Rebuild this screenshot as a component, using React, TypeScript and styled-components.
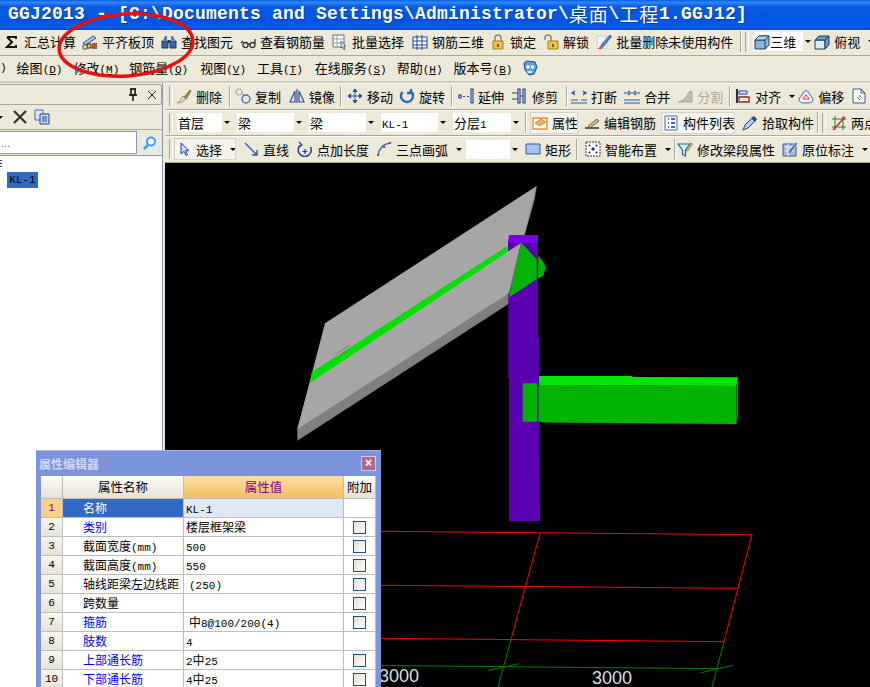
import React from "react";
import styled, { createGlobalStyle } from "styled-components";

const CJK = `"Noto Sans CJK SC", "Liberation Sans", sans-serif`;
const MONO = `"Liberation Mono", "Noto Sans CJK SC", monospace`;

const GlobalStyle = createGlobalStyle`
  html, body { margin: 0; padding: 0; background: #ece9d8; }
  body { font-family: ${CJK}; font-size: 13px; color: #000; }
`;

const Shell = styled.div`
  position: relative;
  width: 870px;
  height: 687px;
  overflow: hidden;
  background: #ece9d8;
`;

const TitleBar = styled.div`
  height: 30px;
  box-sizing: border-box;
  padding: 0 0 2px 8px;
  display: flex;
  align-items: center;
  background: linear-gradient(180deg, #0a5fe6 0%, #2f86f5 8%, #0a5be2 22%, #0054e3 70%, #0a5ee8 90%, #0048c8 100%);
  color: #fff;
  font-family: ${MONO};
  font-weight: bold;
  font-size: 18px;
  letter-spacing: 0.2px;
  white-space: pre;
  text-shadow: 1px 1px 0 #0a3aa0;
`;

const TitleCjk = styled.span`
  font-size: 19px;
  font-weight: normal;
  letter-spacing: 0.7px;
`;

const Bar = styled.div<{ $h: number; $pad?: number }>`
  display: flex;
  align-items: center;
  height: ${(p) => p.$h}px;
  padding-left: ${(p) => p.$pad ?? 0}px;
  padding-bottom: 1px;
  box-sizing: border-box;
  background: #ece9d8;
  white-space: nowrap;
  overflow: hidden;
`;

const MainBar = styled(Bar)`
  padding-bottom: 3px;
  border-top: 1px solid #f6f4ea;
  border-bottom: 1px solid #aca899;
`;

const MenuBar = styled(Bar)`
  padding-bottom: 2px;
  border-bottom: 2px solid #cfccbc;
`;

const ToolRow = styled(Bar)`
  border-bottom: 1px solid #aca899;
  border-top: 1px solid #fbfaf4;
`;

const Body = styled.div`
  display: flex;
  height: 604px;
`;

const LeftPanel = styled.div`
  width: 162px;
  flex: none;
  display: flex;
  flex-direction: column;
  border-right: 1px solid #8a9ab0;
  box-sizing: content-box;
`;

const PanelHead = styled.div`
  height: 19px;
  margin-top: 1px;
  display: flex;
  align-items: center;
  justify-content: flex-end;
  gap: 3px;
  padding-right: 1px;
  border: 1px solid #aca899;
  border-left: 0;
  border-radius: 0 3px 3px 0;
`;

const PanelTools = styled.div`
  height: 24px;
  display: flex;
  align-items: center;
  border-bottom: 1px solid #aca899;
`;

const SearchRow = styled.div`
  height: 25px;
  display: flex;
  align-items: center;
  gap: 5px;
`;

const SearchBox = styled.div`
  width: 137px;
  height: 23px;
  box-sizing: border-box;
  background: #fff;
  border: 1px solid #7f9db9;
  border-left: 0;
  color: #888;
  font-size: 11px;
  line-height: 20px;
  padding-left: 1px;
`;

const Tree = styled.div`
  flex: 1;
  background: #fff;
  border-top: 1px solid #7f9db9;
  padding: 2px 0 0 0;
  font-family: ${MONO};
  font-size: 11px;
`;

const TreeStub = styled.div`
  height: 14px;
  line-height: 12px;
  margin-left: -4px;
`;

const TreeItem = styled.div`
  margin-left: 7px;
  width: 31px;
  height: 16px;
  line-height: 16px;
  text-align: center;
  background: #316ac5;
  color: #000;
`;

const Work = styled.div`
  flex: 1;
  min-width: 0;
  margin-left: 2px;
  display: flex;
  flex-direction: column;
`;

const Canvas = styled.div`
  flex: 1;
  background: #000;
`;

const Grip = styled.span<{ $r?: number }>`
  width: 2px;
  height: 20px;
  margin: 0 ${(p) => p.$r ?? 4}px 0 4px;
  flex: none;
  border-left: 1px solid #aca899;
  border-right: 1px solid #fff;
`;

const Sep = styled.span<{ $l: number; $r: number }>`
  width: 1px;
  height: 21px;
  flex: none;
  margin-left: ${(p) => p.$l}px;
  margin-right: ${(p) => p.$r}px;
  background: #aca899;
  box-shadow: 1px 0 0 #fff;
`;

const Tool = styled.span<{ $l: number; $on?: boolean; $off?: boolean }>`
  display: inline-flex;
  align-items: center;
  flex: none;
  gap: 4px;
  margin-left: ${(p) => p.$l}px;
  height: 22px;
  box-sizing: border-box;
  color: ${(p) => (p.$off ? "#aca899" : "#000")};
  ${(p) => (p.$on ? "background: #f4f3ec; outline: 1px solid #d6d3c4; outline-offset: -1px; padding-left: 2px;" : "")}
`;

const Ascii = styled.span<{ $u?: boolean }>`
  font-family: ${MONO};
  font-size: 11px;
  white-space: pre;
  text-decoration: ${(p) => (p.$u ? "underline" : "none")};
`;

const Arrow = styled.span<{ $l?: number }>`
  flex: none;
  margin-left: ${(p) => p.$l ?? 4}px;
  width: 0;
  height: 0;
  border-left: 3px solid transparent;
  border-right: 3px solid transparent;
  border-top: 3px solid #000;
`;

const Combo = styled.span<{ $w: number; $l: number }>`
  display: inline-flex;
  align-items: center;
  flex: none;
  margin-left: ${(p) => p.$l}px;
  width: ${(p) => p.$w}px;
  height: 19px;
  background: #fff;
  font-size: 13px;
  padding-left: 1px;
  box-sizing: border-box;
`;

const ComboText = styled.span`
  flex: 1;
  min-width: 0;
`;

const ComboDrop = styled.span`
  width: 10px;
  height: 19px;
  flex: none;
  background: #ece9d8;
  display: flex;
  align-items: center;
  justify-content: center;
`;

const Menu = styled.span<{ $l: number }>`
  flex: none;
  margin-left: ${(p) => p.$l}px;
`;

const Dialog = styled.div`
  position: absolute;
  left: 36px;
  top: 450px;
  width: 345px;
  height: 260px;
  box-sizing: border-box;
  background: #7b94dc;
  border-top: 1px solid #a9b8e8;
  padding: 0 5px;
`;

const DialogHead = styled.div`
  height: 25px;
  display: flex;
  align-items: center;
  justify-content: space-between;
  color: #cfd9f5;
  font-weight: bold;
  font-size: 12px;
  margin-left: -2px;
`;

const CloseBtn = styled.span`
  width: 13px;
  height: 13px;
  border: 1px solid #d8c8d8;
  background: #b06a90;
  color: #fff;
  font: bold 12px/13px "Liberation Sans", sans-serif;
  text-align: center;
`;

const PropGrid = styled.div`
  display: grid;
  grid-template-columns: 22px 121px 160px 32px;
  grid-template-rows: 23px;
  grid-auto-rows: 19px;
  background: #fff;
  width: 335px;
`;

const Cell = styled.div`
  box-sizing: border-box;
  border-right: 1px solid #bdbdbd;
  border-bottom: 1px solid #bdbdbd;
  font-size: 12px;
  line-height: 18px;
  white-space: nowrap;
  overflow: hidden;
`;

const HeadCell = styled(Cell)<{ $hot?: boolean }>`
  line-height: 22px;
  font-size: 12.5px;
  text-align: center;
  background: ${(p) =>
    p.$hot ? "linear-gradient(180deg, #fbdfa8, #f2bf60)" : "linear-gradient(180deg, #fcfcf8, #e6e3d6)"};
  color: ${(p) => (p.$hot ? "#800080" : "#000")};
`;

const NumCell = styled(Cell)<{ $hot?: boolean }>`
  text-align: center;
  font-family: ${MONO};
  font-size: 11px;
  background: ${(p) => (p.$hot ? "#fdd08a" : "linear-gradient(180deg, #f8f7f0, #e6e3d6)")};
  color: ${(p) => (p.$hot ? "#800080" : "#000")};
`;

const NameCell = styled(Cell)<{ $link?: boolean; $hot?: boolean }>`
  padding-left: 20px;
  background: ${(p) => (p.$hot ? "#316ac5" : "#fff")};
  color: ${(p) => (p.$hot ? "#fff" : p.$link ? "#0000ff" : "#000")};
`;

const ValueCell = styled(Cell)<{ $hot?: boolean; $inset?: boolean }>`
  padding-left: ${(p) => (p.$inset ? 5 : 2)}px;
  background: ${(p) => (p.$hot ? "#dfe8f6" : "#fff")};
`;

const CheckCell = styled(Cell)`
  display: flex;
  align-items: center;
  justify-content: center;
`;

const Check = styled.span`
  width: 11px;
  height: 11px;
  border: 1px solid #1c5180;
  background: linear-gradient(135deg, #e0ded4, #ffffff);
`;

const Ink = styled.svg`
  width: 16px;
  height: 16px;
  flex: none;
  display: block;
`;

const Ring = styled.svg`
  position: absolute;
  left: 0;
  top: 0;
  pointer-events: none;
`;

const Scene = styled.svg`
  display: block;
`;

const art: Record<string, React.ReactNode> = {
  sigma: <path d="M3 3h9v2M3 3l5 5-5 5h9v-2" fill="none" stroke="#111" strokeWidth="2" />,
  level: (
    <>
      <path d="M1 9l10-7 3 2-10 7z" fill="#9fc0e8" stroke="#3a5a8a" />
      <path d="M5 10h4v4H5z" fill="#ffd21e" stroke="#222" />
      <path d="M10 9h5v6h-5z" fill="#b0552a" />
      <path d="M1 11h4v4H1z" fill="#e8e0b8" stroke="#555" />
    </>
  ),
  binoc: (
    <>
      <path d="M2 6l2-4h2v4zM10 6V2h2l2 4z" fill="#5a7cc0" />
      <path d="M1 7h6v7H1zM9 7h6v7H9z" fill="#3f61a8" stroke="#20356a" />
      <path d="M7 6h2v3H7z" fill="#20356a" />
    </>
  ),
  glasses: (
    <path d="M1 9l2-2M15 5v5M3 11a2.500 2.500 0 105 0 2.500 2.500 0 10-5 0M10 11a2.500 2.500 0 105 0 2.500 2.500 0 10-5 0M8 10h2" fill="none" stroke="#333" strokeWidth="1.300" />
  ),
  batch: (
    <>
      <path d="M1 1h11v12H1z" fill="#fff" stroke="#667" />
      <path d="M1 5h11M1 9h11M5 1v12" stroke="#99a" />
      <path d="M9 7l5 5-2 .5 1 3-1 .5-1.500-3L9 14z" fill="#cde" stroke="#246" strokeWidth=".7" />
    </>
  ),
  grid: <path d="M1 3h14v11H1zM1 7h14M1 11h14M5 1v15M10 1v15" fill="#fff" stroke="#2a50a0" strokeWidth="1.100" />,
  lock: (
    <>
      <path d="M5 7V4a3 3 0 016 0v3" fill="none" stroke="#887" strokeWidth="1.500" />
      <path d="M3 7h10v8H3z" fill="#f2c24e" stroke="#a87a14" />
      <path d="M7 10h2v3H7z" fill="#7a5a10" />
    </>
  ),
  unlock: (
    <>
      <path d="M2 6V4a3 3 0 016 0v3" fill="none" stroke="#887" strokeWidth="1.500" />
      <path d="M5 7h10v8H5z" fill="#f2c24e" stroke="#a87a14" />
      <path d="M9 10h2v3H9z" fill="#7a5a10" />
    </>
  ),
  wipe: (
    <>
      <path d="M1 2h10v13H1z" fill="#eef1f6" stroke="#ccd" />
      <path d="M5 11L14 1l1.500 1.500L7 13z" fill="#4f80d8" stroke="#2a4a90" strokeWidth=".7" />
      <path d="M2 15l3-4 2 2-1 2z" fill="#e04a6a" />
    </>
  ),
  cube: (
    <>
      <path d="M1 6l4-4h10v9l-4 4H1z" fill="#8ab8dc" stroke="#1f3a5a" />
      <path d="M1 6h10v9M11 6l4-4" fill="none" stroke="#1f3a5a" />
      <path d="M5 2h10l-4 4H1z" fill="#bcd8ee" stroke="#1f3a5a" />
    </>
  ),
  topview: (
    <>
      <path d="M1 6h10v9H1z" fill="#dcebf6" stroke="#1f3a5a" />
      <path d="M1 6l4-4h10l-4 4zM11 6l4-4v9l-4 4z" fill="#6d9cc6" stroke="#1f3a5a" />
    </>
  ),
  helper: (
    <>
      <path d="M2 3l3-2 8 1 2 5-3 7-5 1-4-5z" fill="#5da2e0" stroke="#1c4a8a" />
      <circle cx="6" cy="7" r="1.800" fill="#fff" />
      <circle cx="10.500" cy="7" r="1.800" fill="#fff" />
      <path d="M5 11h5v2H6z" fill="#d8ecfa" />
    </>
  ),
  pin: <path d="M5 2h6M6 2v6h4V2M4 8h8M8 8v6" fill="none" stroke="#000" strokeWidth="1.400" />,
  close: <path d="M4 4l8 8M12 4l-8 8" stroke="#222" strokeWidth="1" fill="none" />,
  cross: <path d="M2 2l12 12M14 2L2 14" stroke="#333" strokeWidth="2.200" fill="none" />,
  copy: (
    <>
      <path d="M1 1h8v10H1z" fill="#dfe8fa" stroke="#4a6ab8" />
      <path d="M6 5h9v10H6z" fill="#cfdcf6" stroke="#1c3f94" />
      <path d="M8 8h5M8 10h5M8 12h5" stroke="#1c3f94" />
    </>
  ),
  search: (
    <>
      <path d="M0 1h16v15H0z" fill="#e4ecf6" />
      <circle cx="9" cy="6.500" r="4" fill="#fff" stroke="#3d9ae8" strokeWidth="2" />
      <path d="M6 10l-4 4" stroke="#3d9ae8" strokeWidth="2.500" />
    </>
  ),
  broom: (
    <>
      <path d="M8 9L14 2l1 1-5 8z" fill="#c8902a" stroke="#333" strokeWidth=".6" />
      <path d="M1 15c2-1 4-4 6-7l3 3c-2 2-5 4-9 4z" fill="#e8d8a0" stroke="#776" strokeWidth=".7" />
    </>
  ),
  dup: (
    <>
      <circle cx="4" cy="4" r="3" fill="none" stroke="#667" strokeDasharray="1.500 1" />
      <circle cx="11" cy="11" r="4" fill="none" stroke="#4a6ab8" strokeWidth="1.400" />
      <path d="M7 6l3 2" stroke="#4a6ab8" />
    </>
  ),
  mirror: <path d="M8 1v14M6 3L1 14h5zM10 3l5 11h-5z" fill="none" stroke="#2a50a0" strokeWidth="1.200" />,
  move: <path d="M8 1v14M1 8h14M8 1L6 3.500h4zM8 15l-2-2.500h4zM1 8l2.500-2v4zM15 8l-2.500-2v4z" fill="#2a50a0" stroke="#2a50a0" />,
  rotate: <path d="M3.500 4A6 6 0 1012 3.500M12 1v4H8" fill="none" stroke="#2468c8" strokeWidth="2.400" />,
  extend: <path d="M1 7h2v3H1zM5 8.500h2M9 8.500h2M13 1h2v14h-2z" fill="none" stroke="#1c3f94" strokeWidth="1.100" />,
  trim: <path d="M0 5h6M0 11h6M6 1h2v14H6zM11 1h2v14h-2zM8 8h3" fill="none" stroke="#1c3f94" strokeWidth="1.100" />,
  split: <path d="M0 12h7M10 12h6M0 15h16M4 5h-4M12 5h4M4 3L1 5l3 2M12 3l3 2-3 2" fill="none" stroke="#2a5aa8" strokeWidth="1.100" />,
  join: <path d="M0 12h16M0 15h16M0 5h5M11 5h5M4 3l3 2-3 2M12 3L9 5l3 2" fill="none" stroke="#2a5aa8" strokeWidth="1.100" />,
  cut: <path d="M1 14l6-2 6-9 2 1v10H1z" fill="#c0bdac" stroke="#aca899" />,
  align: (
    <>
      <path d="M2 1v14" stroke="#1c2f70" strokeWidth="2" />
      <path d="M4 3h8v3H4z" fill="#e8ecf8" stroke="#1c3f94" />
      <path d="M4 9h10v5H4z" fill="#f0f0f0" stroke="#a02020" strokeWidth="1.300" />
    </>
  ),
  offset: (
    <>
      <path d="M1 12c0-3 3-4 4-7 1-3 5-3 6 0 1 3 4 4 4 7 0 2-2 3-7 3s-7-1-7-3z" fill="#eaf0fa" stroke="#3a6aa8" />
      <path d="M5 11c0-2 2-2 3-4 1 2 3 2 3 4z" fill="#fbdcdc" stroke="#e04040" />
    </>
  ),
  note: <path d="M2 1h8l4 4v10H2zM10 1v4h4M6 9l3 3M9 7v2" fill="#fff" stroke="#3a5a8a" />,
  prop: (
    <>
      <path d="M1 3h14v11H1z" fill="#fff" stroke="#ee8a2a" strokeWidth="1.400" />
      <path d="M3 8l6-4 5 3-6 4z" fill="#e8b850" stroke="#8a6a1a" strokeWidth=".6" />
    </>
  ),
  editbar: (
    <>
      <path d="M1 13h14" stroke="#222" strokeWidth="1.400" />
      <path d="M4 11l9-7 2 2-9 7z" fill="#d8b878" stroke="#444" strokeWidth=".7" />
    </>
  ),
  list: (
    <>
      <path d="M2 1h12v14H2z" fill="#f4f6fb" stroke="#4a6ab8" />
      <path d="M5 4h1M5 8h1M5 12h1M8 4h4M8 8h4M8 12h4" stroke="#1c3f94" strokeWidth="1.300" />
    </>
  ),
  pick: (
    <>
      <path d="M1 15l2-5 7-7 3 3-7 7z" fill="#a8d0f0" stroke="#1c4a8a" />
      <path d="M9 3l3-2 3 3-2 3z" fill="#1c4a8a" />
    </>
  ),
  twopt: (
    <>
      <path d="M4 1v14M12 1v14M1 4h14M1 12h14" stroke="#2a7a2a" />
      <path d="M2 15L14 2" stroke="#d02020" strokeWidth="1.300" />
    </>
  ),
  pointer: <path d="M5 2v11l3-2.500 2 4 1.500-.8-2-4H13z" fill="#cfe0f6" stroke="#1c3f94" />,
  line: <path d="M2 2l12 12M14 9v5H9" fill="none" stroke="#2a5aa8" strokeWidth="1.400" />,
  ptlen: (
    <>
      <path d="M3.500 4a6.500 6.500 0 1010 2" fill="none" stroke="#1c3f94" strokeWidth="1.500" />
      <path d="M2 1l3 3-3 2M8 8v5M5.500 10.500h5" fill="none" stroke="#1c3f94" strokeWidth="1.200" />
    </>
  ),
  arc: (
    <>
      <path d="M2 14C3 7 8 3 14 2" fill="none" stroke="#3a6ab0" strokeWidth="1.300" />
      <path d="M1 13h2v2H1zM7 5h2v2H7zM13 1h2v2h-2z" fill="#e03030" />
    </>
  ),
  rect: <path d="M1 3h14v10H1z" fill="#a8c4ec" stroke="#2a5aa8" />,
  smart: (
    <>
      <path d="M1 1h14v14H1z" fill="#fff" stroke="#333" strokeDasharray="2 1" />
      <path d="M4 4h1v1H4zM11 4h1v1h-1zM4 11h1v1H4zM11 11h1v1h-1zM7 7h2v2H7z" fill="#1c2f70" stroke="#1c2f70" />
    </>
  ),
  funnel: (
    <>
      <path d="M1 3h12L8.500 9v6l-3-1.500V9z" fill="#dff0fa" stroke="#1c6a9a" strokeWidth="1.200" />
      <path d="M9 9l5-7 1.500 1L11 10z" fill="#e8c070" stroke="#555" strokeWidth=".6" />
    </>
  ),
  inplace: (
    <>
      <path d="M1 3h13v12H1z" fill="#a8bcd8" stroke="#3a5a8a" />
      <path d="M3 6h9M3 10h9M6 3v12" stroke="#eef" />
      <path d="M6 11L14 1l1.500 1.500L8 13z" fill="#3a6ab8" stroke="#fff" strokeWidth=".5" />
    </>
  ),
};

function Icon({ name }: { name: string }) {
  return <Ink viewBox="0 0 16 16">{art[name]}</Ink>;
}

type Item = { icon: string; text?: string; l: number; arrow?: boolean; on?: boolean; off?: boolean };

function Tools({ items }: { items: Item[] }) {
  return (
    <>
      {items.map((t) => (
        <Tool key={t.icon + t.l} $l={t.l} $on={t.on} $off={t.off}>
          <Icon name={t.icon} />
          {t.text && <span>{t.text}</span>}
          {t.arrow && <Arrow />}
        </Tool>
      ))}
    </>
  );
}

const mainTools: Item[] = [
  { icon: "sigma", text: "汇总计算", l: 4 },
  { icon: "level", text: "平齐板顶", l: 6 },
  { icon: "binoc", text: "查找图元", l: 7 },
  { icon: "glasses", text: "查看钢筋量", l: 7 },
  { icon: "batch", text: "批量选择", l: 7 },
  { icon: "grid", text: "钢筋三维", l: 8 },
  { icon: "lock", text: "锁定", l: 6 },
  { icon: "unlock", text: "解锁", l: 7 },
  { icon: "wipe", text: "批量删除未使用构件", l: 7 },
];

const menus = [
  { name: "绘图", key: "D", l: 10 },
  { name: "修改", key: "M", l: 11 },
  { name: "钢筋量", key: "Q", l: 10 },
  { name: "视图", key: "V", l: 12 },
  { name: "工具", key: "T", l: 11 },
  { name: "在线服务", key: "S", l: 12 },
  { name: "帮助", key: "H", l: 10 },
  { name: "版本号", key: "B", l: 11 },
];

const editA: Item[] = [{ icon: "broom", text: "删除", l: 0 }];
const editB: Item[] = [
  { icon: "dup", text: "复制", l: 0 },
  { icon: "mirror", text: "镜像", l: 8 },
];
const editC: Item[] = [
  { icon: "move", text: "移动", l: 0 },
  { icon: "rotate", text: "旋转", l: 6 },
];
const editD: Item[] = [
  { icon: "extend", text: "延伸", l: 0 },
  { icon: "trim", text: "修剪", l: 8 },
];
const editE: Item[] = [
  { icon: "split", text: "打断", l: 0 },
  { icon: "join", text: "合并", l: 7 },
  { icon: "cut", text: "分割", l: 7, off: true },
];
const editF: Item[] = [
  { icon: "align", text: "对齐", l: 0, arrow: true },
  { icon: "offset", text: "偏移", l: 3 },
  { icon: "note", l: 7 },
];

const compTools: Item[] = [
  { icon: "prop", text: "属性", l: 0, on: true },
  { icon: "editbar", text: "编辑钢筋", l: 6 },
  { icon: "list", text: "构件列表", l: 5, on: true },
  { icon: "pick", text: "拾取构件", l: 7 },
];

const drawA: Item[] = [
  { icon: "line", text: "直线", l: 7 },
  { icon: "ptlen", text: "点加长度", l: 8 },
  { icon: "arc", text: "三点画弧", l: 7, arrow: true },
];
const drawB: Item[] = [{ icon: "rect", text: "矩形", l: 5 }];
const drawC: Item[] = [{ icon: "smart", text: "智能布置", l: 0, arrow: true }];
const drawD: Item[] = [
  { icon: "funnel", text: "修改梁段属性", l: 0 },
  { icon: "inplace", text: "原位标注", l: 7, arrow: true },
];

const combos = [
  { text: "首层", w: 55, l: 0 },
  { text: "梁", w: 67, l: 5 },
  { text: "梁", w: 67, l: 5 },
  { text: "KL-1", w: 67, l: 5 },
  { text: "分层1", w: 68, l: 5 },
];

type Prop = { name: string; unit?: string; value: string; link?: boolean; check: boolean; inset?: boolean };

const props: Prop[] = [
  { name: "名称", value: "KL-1", check: false },
  { name: "类别", value: "楼层框架梁", link: true, check: true },
  { name: "截面宽度", unit: "(mm)", value: "500", check: true },
  { name: "截面高度", unit: "(mm)", value: "550", check: true },
  { name: "轴线距梁左边线距", value: "(250)", check: true, inset: true },
  { name: "跨数量", value: "", check: true },
  { name: "箍筋", value: "中8@100/200(4)", link: true, check: true, inset: true },
  { name: "肢数", value: "4", link: true, check: false },
  { name: "上部通长筋", value: "2中25", link: true, check: true },
  { name: "下部通长筋", value: "4中25", link: true, check: true },
];

// splits mixed text so latin runs get the narrow mono face, like the SimSun half widths
function Mixed({ text }: { text: string }) {
  const parts = text.match(/[\x20-\x7e]+|[^\x20-\x7e]+/g) ?? [];
  return (
    <>
      {parts.map((p, i) => (/^[\x20-\x7e]/.test(p) ? <Ascii key={i}>{p}</Ascii> : <span key={i}>{p}</span>))}
    </>
  );
}

function Model() {
  return (
    <Scene width="705" height="524" viewBox="165 163 705 524">
      <g fill="none" strokeWidth="1">
        <path d="M381 665.500L717 668.700" stroke="#008000" />
        <path d="M511 639.500L498 687M724 641.700L712 687M488 670.500L519 663.700M701 672.700L733 665.300" stroke="#008000" />
        <path d="M381 531.300L752 534.700L724 641.700L381 638.300M381 585.300L738 588.300M540 533.300L511 639.500" stroke="#ff0000" />
      </g>
      <text x="379" y="682" fontFamily="Liberation Sans" fontSize="18" fill="#dddddd">3000</text>
      <text x="592" y="684" fontFamily="Liberation Sans" fontSize="18" fill="#dddddd">3000</text>

      <polygon points="536.700,186 535,198 524,238 520,238" fill="#858585" />
      <polygon points="297.300,429.300 297.300,440.700 510,303 510,292" fill="#808080" />
      <polygon points="536.700,186 325,323.300 297.300,429.300 509,293 522,242" fill="#a6a6a6" />

      <polygon points="510,235 538,235 538,337 539,337 539,378 539.500,378 540,520 539,521 509,521 509,378 508.300,378 508.300,304 508,243" fill="#5a00b0" />
      <polygon points="509,235 538,235 537.500,243 508,243" fill="#7a00e6" />

      <polygon points="310,382.700 521,243 509,293 297.300,429.300" fill="#a6a6a6" />
      <polygon points="311.700,372.300 507.300,246 507.300,252 310,382.700" fill="#00e000" />
      <polygon points="521.300,242.700 536.700,259.300 536.700,279.300 509.300,297.300 510,291" fill="#00b400" />
      <polygon points="521.300,243 509,293 511,287" fill="#888888" />
      <polygon points="538.300,255 546,266.700 543.300,276 538,278.300" fill="#00b400" />
      <path d="M336 354l14-9M340 356l8-6" stroke="#777" strokeWidth="1" />

      <rect x="522.700" y="383.300" width="15" height="38.400" fill="#00b400" />
      <rect x="537" y="383.300" width="1" height="38.400" fill="#3a2ab0" />
      <polygon points="539,376 632,376 632,377 738,377.300 736.500,386 539,385" fill="#00e600" />
      <polygon points="538.500,385 736.500,386 736.500,424 656,423.500 544,422.500 538.500,421.700" fill="#00b400" />
      <polygon points="736.500,386 738,377.300 738,417 736.500,424" fill="#00a000" />
    </Scene>
  );
}

export default function App() {
  return (
    <Shell>
      <GlobalStyle />
      <TitleBar>
        GGJ2013 - [C:\Documents and Settings\Administrator\<TitleCjk>桌面</TitleCjk>\<TitleCjk>工程</TitleCjk>1.GGJ12]
      </TitleBar>

      <MainBar $h={26}>
        <Tools items={mainTools} />
        <Sep $l={7} $r={0} />
        <Grip />
        <Combo $w={60} $l={0}>
          <Icon name="cube" />
          <ComboText>三维</ComboText>
          <ComboDrop><Arrow $l={0} /></ComboDrop>
        </Combo>
        <Tool $l={1}>
          <Icon name="topview" />
          <span>俯视</span>
          <Arrow />
        </Tool>
      </MainBar>

      <MenuBar $h={27}>
        <Ascii>)</Ascii>
        {menus.map((m) => (
          <Menu key={m.key} $l={m.l}>
            {m.name}
            <Ascii>(</Ascii>
            <Ascii $u>{m.key}</Ascii>
            <Ascii>)</Ascii>
          </Menu>
        ))}
        <Tool $l={10}><Icon name="helper" /></Tool>
      </MenuBar>

      <Body>
        <LeftPanel>
          <PanelHead>
            <Icon name="pin" />
            <Icon name="close" />
          </PanelHead>
          <PanelTools>
            <Arrow $l={-3} />
            <Tool $l={9}><Icon name="cross" /></Tool>
            <Tool $l={6}><Icon name="copy" /></Tool>
          </PanelTools>
          <SearchRow>
            <SearchBox>...</SearchBox>
            <Tool $l={0}><Icon name="search" /></Tool>
          </SearchRow>
          <Tree>
            <TreeStub>E</TreeStub>
            <TreeItem>KL-1</TreeItem>
          </Tree>
        </LeftPanel>

        <Work>
          <ToolRow $h={27}>
            <Grip $r={3} />
            <Tools items={editA} />
            <Sep $l={7} $r={5} />
            <Tools items={editB} />
            <Sep $l={5} $r={6} />
            <Tools items={editC} />
            <Sep $l={6} $r={6} />
            <Tools items={editD} />
            <Sep $l={8} $r={4} />
            <Tools items={editE} />
            <Sep $l={6} $r={5} />
            <Tools items={editF} />
          </ToolRow>
          <ToolRow $h={26}>
            <Grip />
            {combos.map((c) => (
              <Combo key={c.l + c.text + c.w} $w={c.w} $l={c.l}>
                <ComboText><Mixed text={c.text} /></ComboText>
                <ComboDrop><Arrow $l={0} /></ComboDrop>
              </Combo>
            ))}
            <Sep $l={4} $r={4} />
            <Tools items={compTools} />
            <Sep $l={3} $r={0} />
            <Grip />
            <Tool $l={1}>
              <Icon name="twopt" />
              <span>两点</span>
            </Tool>
          </ToolRow>
          <ToolRow $h={27}>
            <Grip />
            <Tool $l={-3} $on>
              <Icon name="pointer" />
              <span>选择</span>
              <Arrow />
            </Tool>
            <Tools items={drawA} />
            <Combo $w={54} $l={4}>
              <ComboText />
              <ComboDrop><Arrow $l={0} /></ComboDrop>
            </Combo>
            <Tools items={drawB} />
            <Sep $l={5} $r={8} />
            <Tools items={drawC} />
            <Sep $l={3} $r={2} />
            <Tools items={drawD} />
          </ToolRow>
          <Canvas>
            <Model />
          </Canvas>
        </Work>
      </Body>

      <Dialog>
        <DialogHead>
          <span>属性编辑器</span>
          <CloseBtn>×</CloseBtn>
        </DialogHead>
        <PropGrid>
          <HeadCell />
          <HeadCell>属性名称</HeadCell>
          <HeadCell $hot>属性值</HeadCell>
          <HeadCell>附加</HeadCell>
          {props.map((p, i) => (
            <React.Fragment key={p.name}>
              <NumCell $hot={i === 0}>{i + 1}</NumCell>
              <NameCell $link={p.link} $hot={i === 0}>
                {p.name}
                {p.unit && <Ascii>{p.unit}</Ascii>}
              </NameCell>
              <ValueCell $hot={i === 0} $inset={p.inset}><Mixed text={p.value} /></ValueCell>
              <CheckCell>{p.check && <Check />}</CheckCell>
            </React.Fragment>
          ))}
        </PropGrid>
      </Dialog>

      <Ring width="870" height="687">
        <ellipse cx="126" cy="45" rx="67" ry="31" transform="rotate(-4 126 45)" fill="none" stroke="#e8100f" strokeWidth="3.500" />
      </Ring>
    </Shell>
  );
}
